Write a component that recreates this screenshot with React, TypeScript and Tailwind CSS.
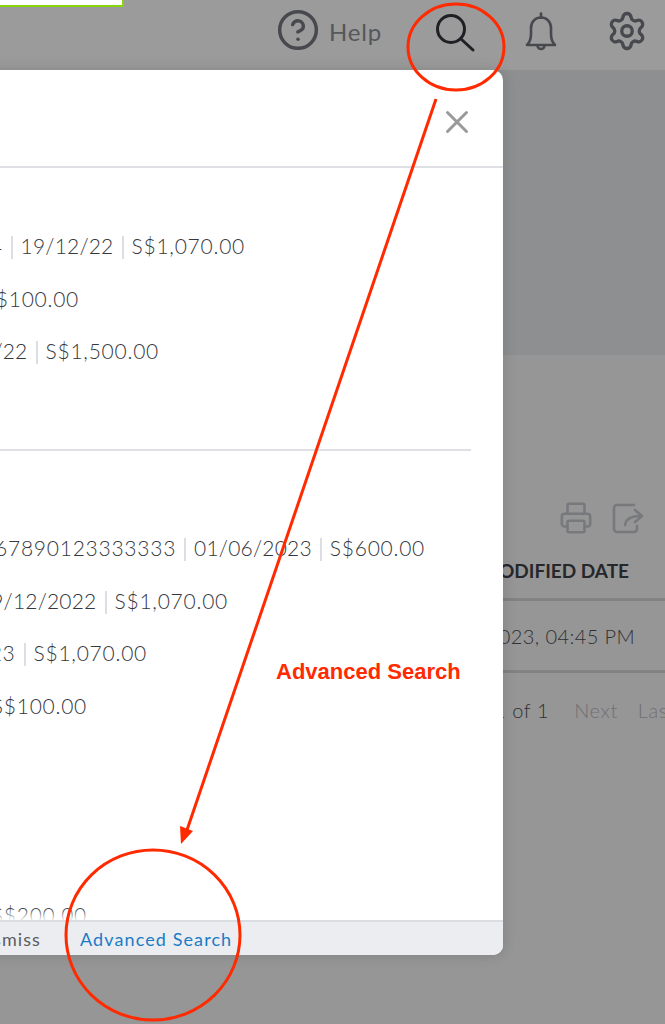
import { CircleHelp, Printer, Settings, X } from "lucide-react";

const firstRows = [
  { width: "w-[245px]", text: <>INV-1234<Bar /><Day>19/12/22</Day><Bar />S$1,070.00</> },
  { width: "w-[79px]", text: <>S$100.00</> },
  { width: "w-[159px]", text: <><Day>12/22</Day><Bar />S$1,500.00</> },
];

const secondRows = [
  { width: "w-[425px]", text: <>1234567890123333333<Bar /><Day>01/06/2023</Day><Bar />S$600.00</> },
  { width: "w-[228px]", text: <><Day>19/12/2022</Day><Bar />S$1,070.00</> },
  { width: "w-[147px]", text: <>23<Bar />S$1,070.00</> },
  { width: "w-[87px]", text: <>S$100.00</> },
];

function Bar() {
  return <span className="inline-block w-[2px] h-[23px] ml-[8px] mr-[8px] align-[-5px] bg-[#dcdee4]" />;
}

function Day({ children }: { children: React.ReactNode }) {
  return <span className="tracking-[0.2px]">{children}</span>;
}

function Row({ width, children }: { width: string; children: React.ReactNode }) {
  return (
    <div className={`${width} h-[52.4px] flex items-center justify-end whitespace-nowrap text-[21px] font-light text-[#35383e] tracking-[0.75px]`}>
      <span>{children}</span>
    </div>
  );
}

const App = () => {
  return (
    <div className="relative w-[665px] h-[1024px] overflow-hidden bg-[#969696] font-['Lato','Noto_Sans',sans-serif]">
      {/* page behind the dim layer */}
      <header className="h-[70px] bg-[#9b9b9b] flex items-start">
        <div className="w-[124px] h-[7px] bg-white border-b-2 border-r-2 border-[#86d40a]" />
        <div className="ml-auto flex items-start text-[#47494e]">
          <CircleHelp size={44} strokeWidth={1.9} className="mt-[8px]" />
          <span className="ml-[9px] mt-[16px] leading-[32px] text-[24px] tracking-[0.8px] text-[#55575b]">Help</span>
          <svg width="44" height="44" viewBox="0 0 44 44" fill="none" stroke="#1f2023" strokeWidth="3" strokeLinecap="round" className="ml-[51px] mt-[11px]">
            <circle cx="18" cy="18" r="13.5" />
            <path d="M28 28l12 11" />
          </svg>
          <svg width="32" height="40" viewBox="0 0 32 40" fill="none" stroke="currentColor" strokeWidth="2.6" strokeLinecap="round" strokeLinejoin="round" className="ml-[48px] mt-[12px]">
            <path d="M16 1.5v4" />
            <path d="M2 33c3-3 4-6 4-11v-6C6 9.500 10.500 5.500 16 5.500S26 9.500 26 16v6c0 5 1 8 4 11z" />
            <path d="M12.500 33.500a3.500 3.500 0 0 0 7 0" />
          </svg>
          <Settings size={42} strokeWidth={1.9} className="ml-[49px] mr-[17px] mt-[10px]" />
        </div>
      </header>
      <div className="h-[285px] bg-[#8e8f91]" />
      <section className="pt-[146px] flex flex-col items-end">
        <div className="flex items-center text-[#77797d] mr-[21px]">
          <Printer size={34} strokeWidth={1.8} />
          <svg width="34" height="34" viewBox="0 0 34 34" fill="none" stroke="currentColor" strokeWidth="2.6" strokeLinecap="round" strokeLinejoin="round" className="ml-[17px]">
            <path d="M24 4H7a3 3 0 0 0-3 3v21a3 3 0 0 0 3 3h17a3 3 0 0 0 3-3v-3" />
            <path d="M15 24c1-6 6-9 15-9" />
            <path d="M25 9l7 6-7 6" />
          </svg>
        </div>
        <div className="w-full h-[55px] mt-[11px] pr-[36px] pb-[2px] border-b-[3px] border-[#828283] flex items-center justify-end text-[19px] font-bold text-[#26272a]">
          MODIFIED DATE
        </div>
        <div className="w-full h-[72px] pr-[30px] border-b-[3px] border-[#828283] flex items-center justify-end text-[20px] tracking-[0.4px] font-light text-[#2f3033]">
          2023, 04:45 PM
        </div>
        <div className="w-full mt-[22px] pl-[494px] flex items-center whitespace-nowrap text-[20px] tracking-[0.6px]">
          <span className="w-[69px] flex justify-end font-light text-[#2f3033]">1 of 1</span>
          <span className="ml-[25px] font-light text-[#6f7073]">Next</span>
          <span className="ml-[20px] font-light text-[#6f7073]">Last</span>
        </div>
      </section>

      {/* modal */}
      <div className="absolute left-[-20px] top-[70px] w-[523px] h-[885px] flex flex-col overflow-hidden bg-white rounded-r-[10px] shadow-[0_0_14px_rgba(0,0,0,0.15)]">
        <div className="h-[98px] shrink-0 flex justify-end border-b-2 border-[#dfe0e5]">
          <X size={38} strokeWidth={1.9} className="mt-[33px] mr-[27px] text-[#9a9a9a]" />
        </div>
        <div className="flex-1 min-h-0 overflow-hidden pl-[20px]">
          <div className="h-[283px] pt-[52px] border-b-2 border-[#dfe0e5] w-[471px]">
            {firstRows.map((row, i) => (
              <Row key={i} width={row.width}>{row.text}</Row>
            ))}
          </div>
          <div className="pt-[71px]">
            {secondRows.map((row, i) => (
              <Row key={i} width={row.width}>{row.text}</Row>
            ))}
            <div className="mt-[157px]">
              <Row width="w-[87px]">S$200.00</Row>
            </div>
          </div>
        </div>
        <div className="h-[35px] shrink-0 relative flex items-center pt-[1px] border-t-2 border-[#dcdde2] bg-[#ecedf1] pl-[20px] text-[18px] tracking-[1.1px] whitespace-nowrap shadow-[0_-6px_8px_rgba(255,255,255,0.9)]">
          <div className="w-[41px] flex justify-end text-[#5a5c62]">
            <span>Dismiss</span>
          </div>
          <span className="ml-[39px] text-[#1b7cc6]">Advanced Search</span>
        </div>
      </div>

      {/* red annotation */}
      <svg width="665" height="1024" viewBox="0 0 665 1024" fill="none" className="absolute inset-0">
        <ellipse cx="456" cy="47" rx="48" ry="43" stroke="#ff2a00" strokeWidth="3" />
        <ellipse cx="153" cy="935" rx="87" ry="85" stroke="#ff2a00" strokeWidth="3" />
        <line x1="436" y1="99" x2="187" y2="830" stroke="#ff2a00" strokeWidth="3" />
        <polygon points="181,844 180,826 193,831" fill="#ff2a00" />
      </svg>
      <span className="absolute left-[276px] top-[659.5px] text-[22px] leading-[24px] font-bold text-[#ff2a00] font-['Liberation_Sans',sans-serif]">
        Advanced Search
      </span>
    </div>
  );
};

export default App;
